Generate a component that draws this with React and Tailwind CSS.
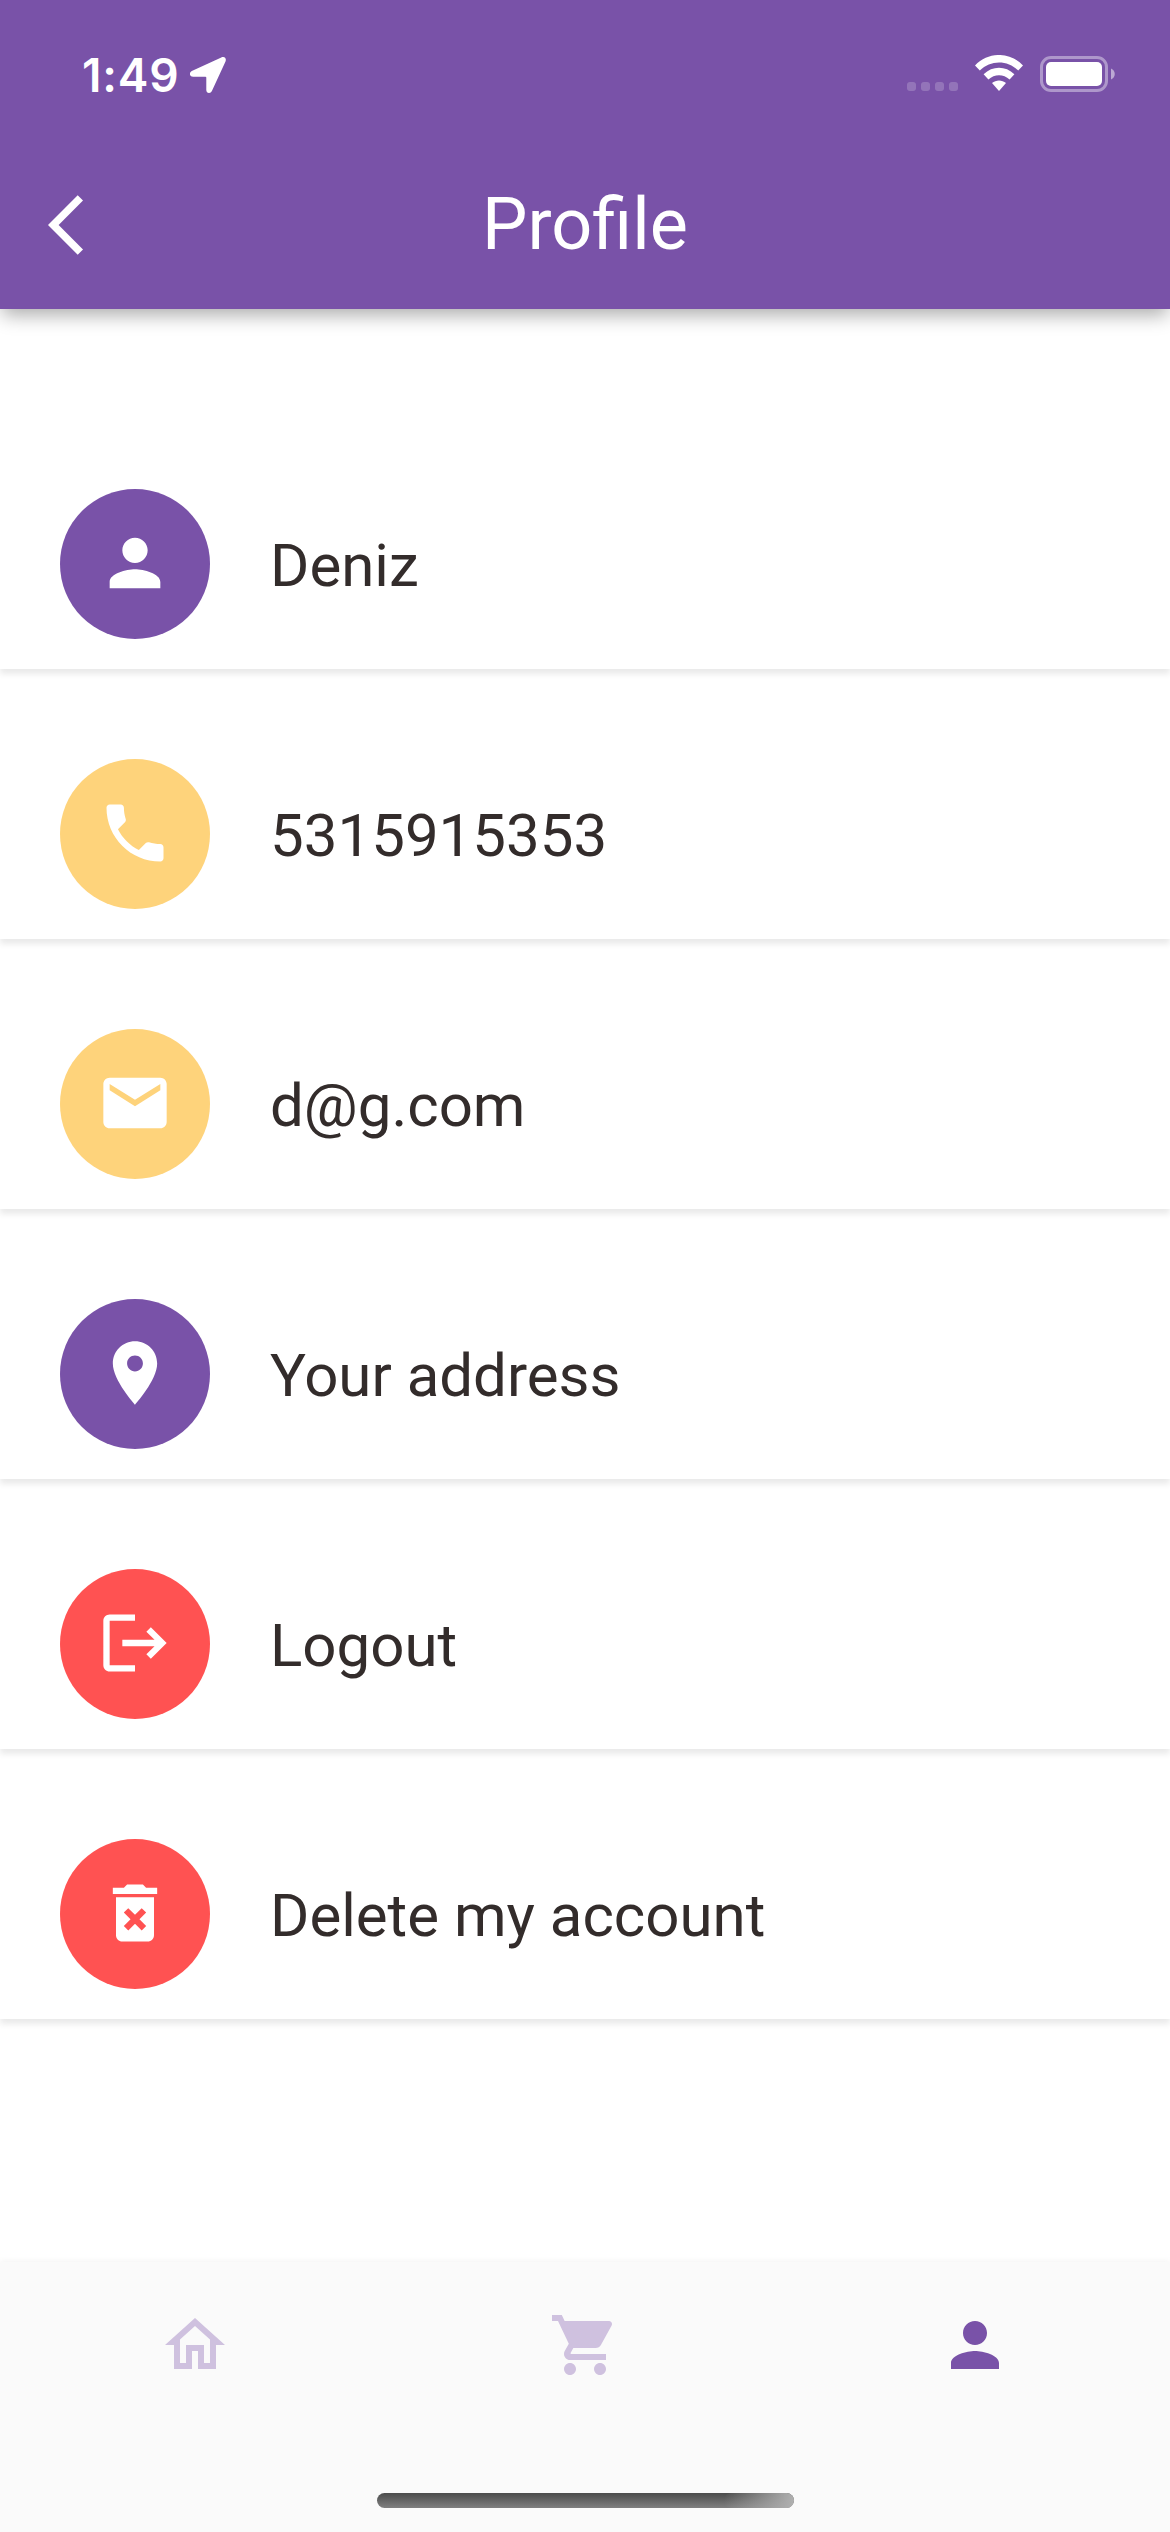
const icons = {
  person:
    "M12 12c2.21 0 4-1.79 4-4s-1.79-4-4-4-4 1.79-4 4 1.79 4 4 4zm0 2c-2.67 0-8 1.34-8 4v2h16v-2c0-2.66-5.33-4-8-4z",
  phone:
    "M6.62 10.79c1.44 2.83 3.76 5.14 6.59 6.59l2.2-2.2c.27-.27.67-.36 1.02-.24 1.12.37 2.33.57 3.57.57.55 0 1 .45 1 1V20c0 .55-.45 1-1 1-9.39 0-17-7.61-17-17 0-.55.45-1 1-1h3.5c.55 0 1 .45 1 1 0 1.25.2 2.45.57 3.57.11.35.03.74-.25 1.02l-2.2 2.2z",
  mail: "M20 4H4c-1.1 0-1.99.9-1.99 2L2 18c0 1.1.9 2 2 2h16c1.1 0 2-.9 2-2V6c0-1.1-.9-2-2-2zm0 4l-8 5-8-5V6l8 5 8-5v2z",
  place:
    "M12 2C8.13 2 5 5.13 5 9c0 5.25 7 13 7 13s7-7.75 7-13c0-3.87-3.13-7-7-7zm0 9.5c-1.38 0-2.5-1.12-2.5-2.5s1.12-2.5 2.5-2.5 2.5 1.12 2.5 2.5-1.12 2.5-2.5 2.5z",
  logout:
    "M17 7l-1.41 1.41L18.17 11H8v2h10.17l-2.58 2.58L17 17l5-5-5-5zM4 5h8V3H4c-1.1 0-2 .9-2 2v14c0 1.1.9 2 2 2h8v-2H4V5z",
  trash:
    "M6 19c0 1.1.9 2 2 2h8c1.1 0 2-.9 2-2V7H6v12zm2.46-7.12l1.41-1.41L12 12.59l2.12-2.12 1.41 1.41L13.41 14l2.12 2.12-1.41 1.41L12 15.41l-2.12 2.12-1.41-1.41L10.59 14l-2.13-2.12zM15.5 4l-1-1h-5l-1 1H5v2h14V4h-3.5z",
  home: "M12 5.69l5 4.5V18h-2v-6H9v6H7v-7.81l5-4.5M12 3L2 12h3v8h6v-6h2v6h6v-8h3L12 3z",
  cart: "M7 18c-1.1 0-1.99.9-1.99 2S5.9 22 7 22s2-.9 2-2-.9-2-2-2zM1 2v2h2l3.6 7.59-1.35 2.45c-.16.28-.25.61-.25.96 0 1.1.9 2 2 2h12v-2H7.42c-.14 0-.25-.11-.25-.25l.03-.12.9-1.63h7.45c.75 0 1.41-.41 1.75-1.03l3.58-6.49c.08-.14.12-.31.12-.48 0-.55-.45-1-1-1H5.21l-.94-2H1zm16 16c-1.1 0-1.99.9-1.99 2s.89 2 1.99 2 2-.9 2-2-.9-2-2-2z",
  back: "M11.67 3.87L9.9 2.1 0 12l9.9 9.9 1.77-1.77L3.54 12z",
};

function Icon({ name, className }) {
  return (
    <svg viewBox="0 0 24 24" fill="currentColor" className={className}>
      <path d={icons[name]} />
    </svg>
  );
}

const rows = [
  { icon: "person", label: "Deniz", color: "bg-[#7952a8]" },
  { icon: "phone", label: "5315915353", color: "bg-[#fed37b]" },
  { icon: "mail", label: "d@g.com", color: "bg-[#fed37b]" },
  { icon: "place", label: "Your address", color: "bg-[#7952a8]" },
  { icon: "logout", label: "Logout", color: "bg-[#ff5252]" },
  { icon: "trash", label: "Delete my account", color: "bg-[#ff5252]" },
];

const tabs = [
  { icon: "home", color: "text-[#cfc1df]" },
  { icon: "cart", color: "text-[#cfc1df]" },
  { icon: "person", color: "text-[#7952a8]" },
];

function StatusBar() {
  return (
    <div className="flex h-[141px] items-start justify-between pt-[48px] pr-[54px] pl-[82px]">
      <div className="flex items-start">
        <span className="w-[108px] font-['Inter',sans-serif] text-[46px] leading-[54px] font-semibold tracking-[0.8px] whitespace-nowrap">
          1:49
        </span>
        <svg viewBox="0 0 36 36" className="mt-[9px] h-9 w-9" fill="currentColor">
          <path d="M1.8 14.1L31.3.4c3-1.4 5.5 1 4.2 4.1L21.9 34c-1.4 3.1-5.6 2.5-5.6-1.1V20.6c0-.6-.3-.9-.9-.9H3.1c-3.6 0-4.4-4-1.3-5.6z" />
        </svg>
      </div>
      <div className="flex items-start pt-[7px]">
        <div className="mt-[27px] flex gap-[5px]">
          {[0, 1, 2, 3].map((n) => (
            <span key={n} className="h-[9px] w-[9px] rounded-[3px] bg-white/20" />
          ))}
        </div>
        <svg viewBox="0 0 48 36" className="ml-[17px] h-9 w-12" fill="currentColor">
          <path d="M0 10.4C13.5-3.5 34.500-3.500 48 10.400L43.200 15.600C32.500 4.700 15.500 4.700 4.800 15.600Z" />
          <path d="M8.600 19.200C17.500 10.600 30.500 10.600 39.400 19.200L34.600 24.400C28.500 18.700 19.500 18.700 13.400 24.400Z" />
          <path d="M17 28C21 24.600 27 24.600 31 28L24 36Z" />
        </svg>
        <svg viewBox="0 0 76 36" className="ml-[17px] mt-px h-9 w-[76px]">
          <rect x="1.500" y="1.500" width="65" height="33" rx="9.500" fill="none" stroke="#fff" strokeOpacity=".4" strokeWidth="3" />
          <rect x="6" y="6" width="56" height="24" rx="5" fill="#fff" />
          <path d="M71 12.500c5 2 5 9 0 11z" fill="#fff" fillOpacity=".5" />
        </svg>
      </div>
    </div>
  );
}

export default function App() {
  return (
    <div className="flex h-[2532px] w-[1170px] flex-col overflow-hidden bg-white font-['Roboto',sans-serif]">
      <header className="h-[309px] shrink-0 bg-[#7952a8] text-white shadow-[0_8px_18px_-2px_rgba(0,0,0,0.33)]">
        <StatusBar />
        <div className="grid h-[168px] grid-cols-[1fr_auto_1fr] items-center">
          <Icon name="back" className="ml-12 h-[72px] w-[72px]" />
          <h1 className="text-[72px] leading-[84px] font-normal">Profile</h1>
        </div>
      </header>

      <main className="flex flex-1 flex-col gap-[90px] pt-[180px]">
        {rows.map((row) => (
          <div
            key={row.label}
            className="flex h-[180px] shrink-0 items-start gap-[60px] bg-white pl-[60px] shadow-[0_5px_6px_rgba(0,0,0,0.085)]"
          >
            <div className={"flex h-[150px] w-[150px] items-center justify-center rounded-full pb-[2px] text-white " + row.color}>
              <Icon name={row.icon} className="h-[76px] w-[76px]" />
            </div>
            <span className="pt-[42px] text-[60px] leading-[70px] whitespace-nowrap text-[#332c2b]">{row.label}</span>
          </div>
        ))}
      </main>

      <nav className="flex h-[270px] shrink-0 flex-col items-center justify-between bg-[#fafafa] pt-[47px] pb-6 shadow-[0_-1px_6px_rgba(0,0,0,0.05)]">
        <div className="grid w-full grid-cols-3 justify-items-center">
          {tabs.map((tab) => (
            <Icon key={tab.icon} name={tab.icon} className={"h-[72px] w-[72px] " + tab.color} />
          ))}
        </div>
        <div className="h-[15px] w-[417px] rounded-full bg-linear-to-b from-[#4c4c4c] to-[#808080]">
          <div className="ml-auto h-full w-[70px] rounded-full bg-linear-to-r from-transparent to-[#b0b0b0]" />
        </div>
      </nav>
    </div>
  );
}
